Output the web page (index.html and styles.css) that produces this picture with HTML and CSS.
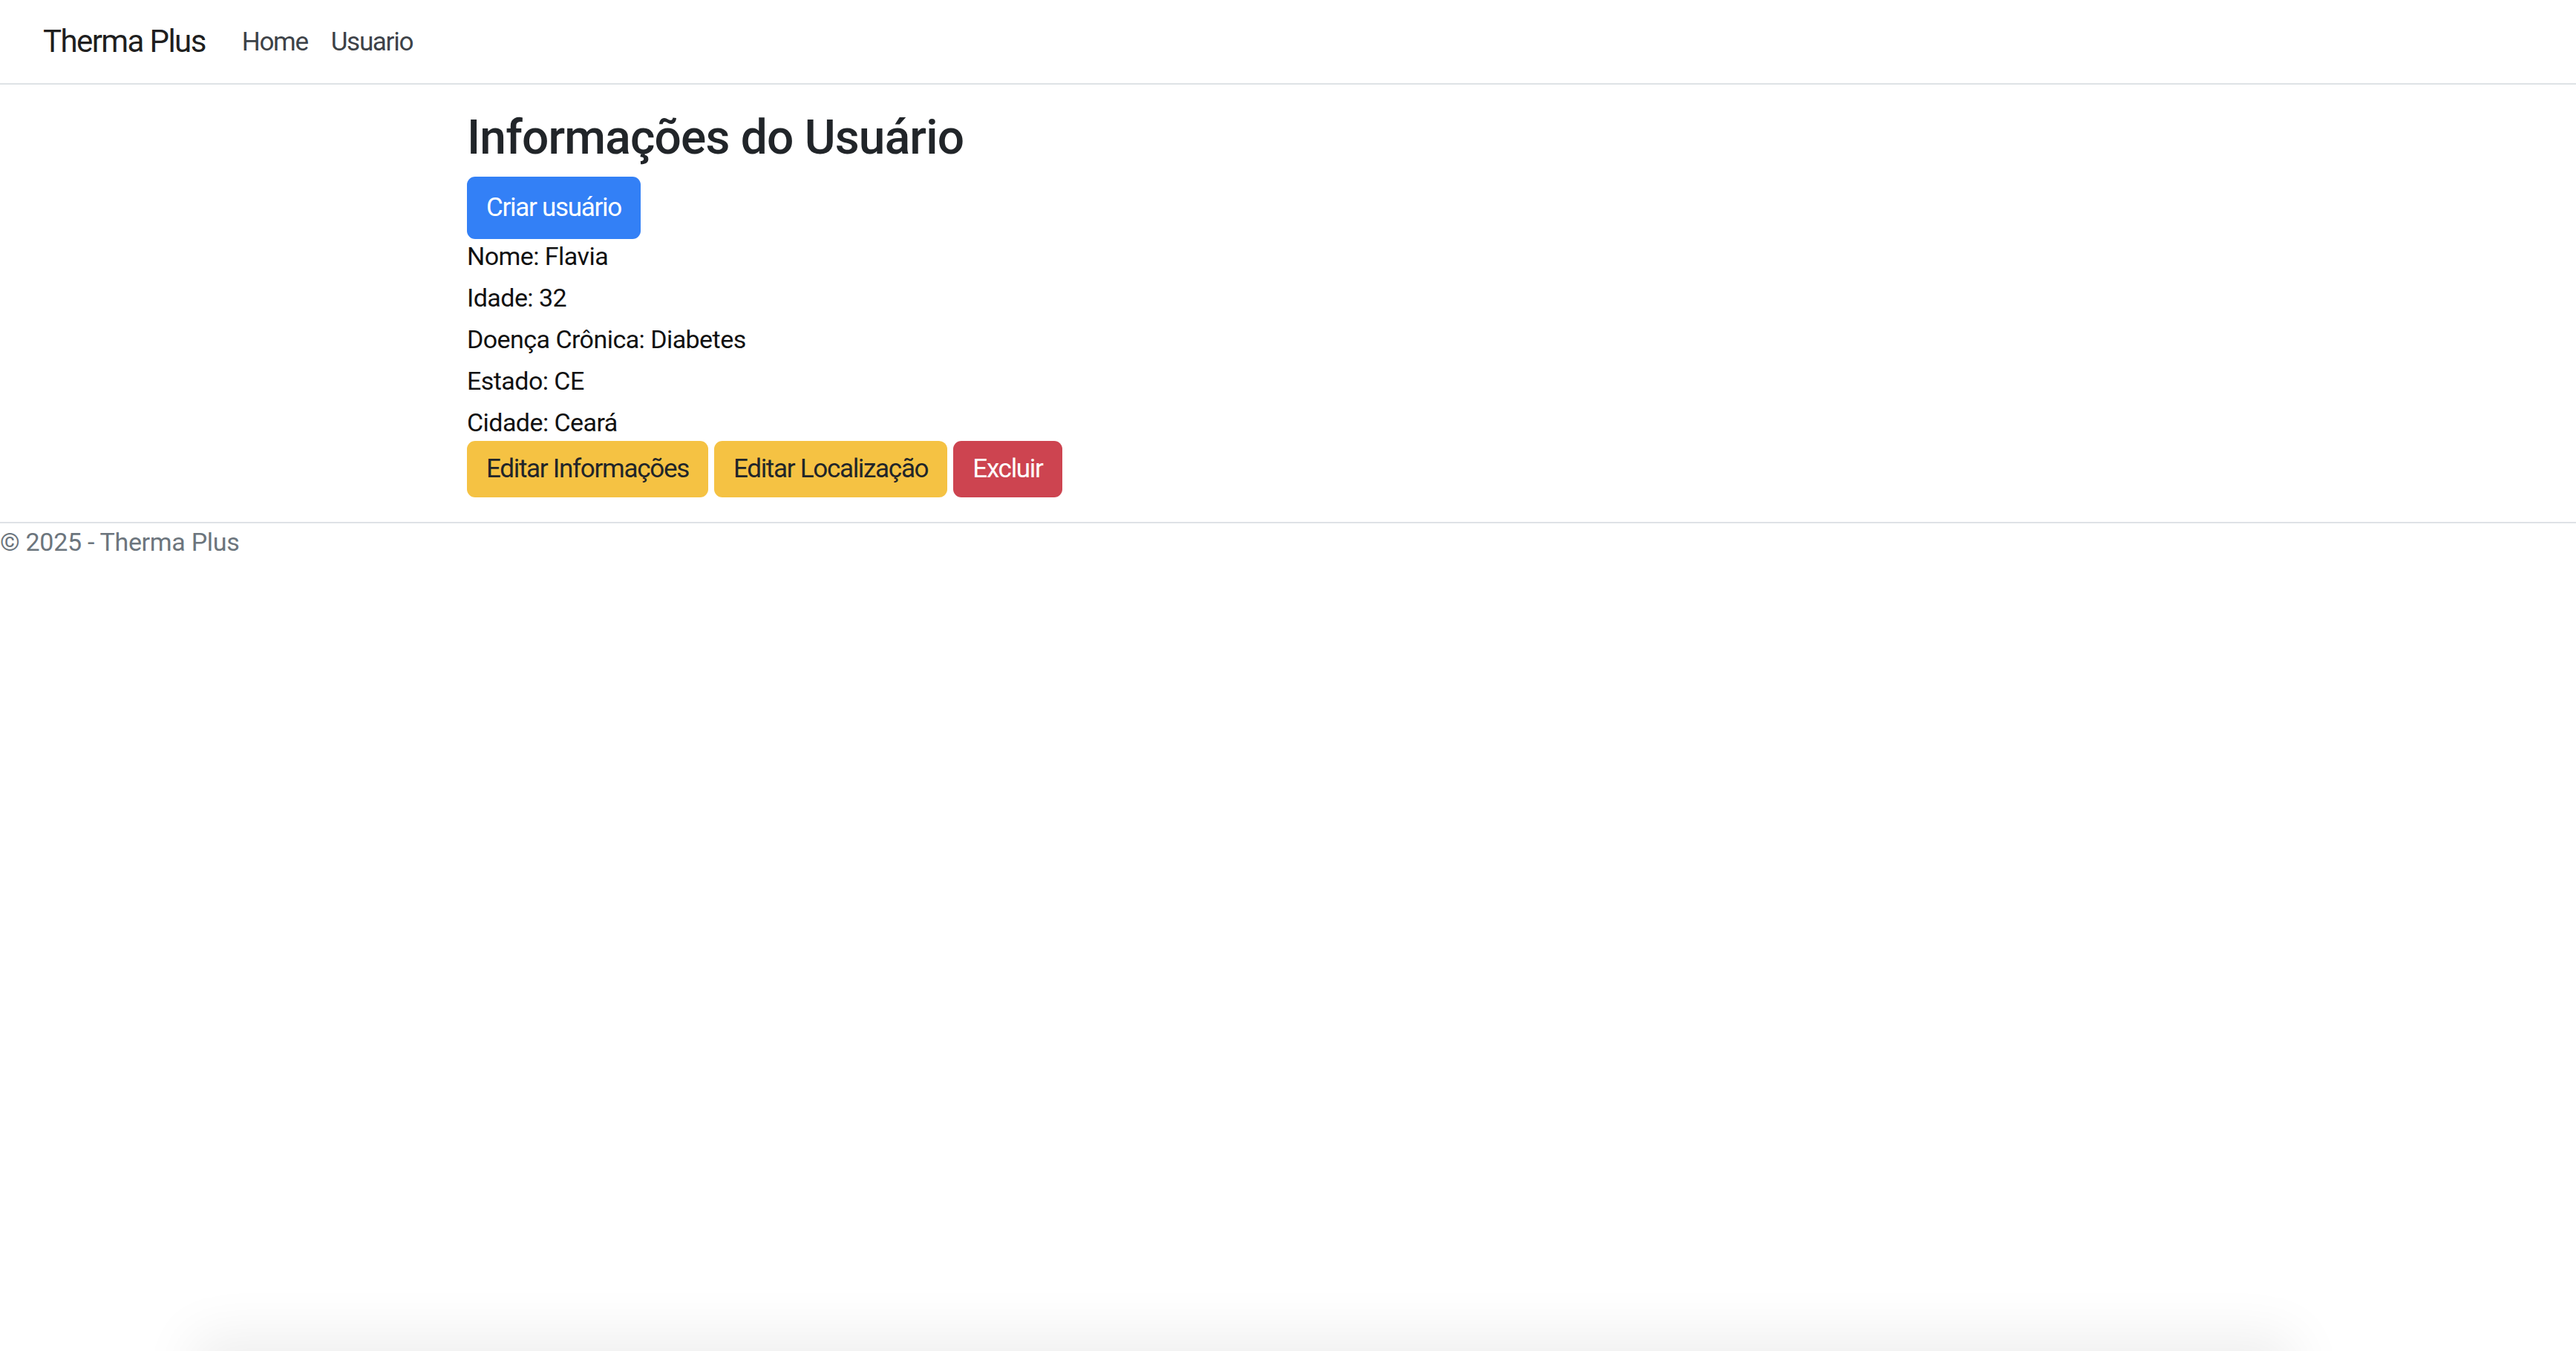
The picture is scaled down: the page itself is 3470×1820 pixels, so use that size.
FILE: index.html
```html
<!DOCTYPE html>
<html lang="pt-BR">
<head>
<meta charset="utf-8">
<title>Usuário - Therma Plus</title>
<link rel="stylesheet" href="styles.css">
</head>
<body>
<header class="navbar">
  <a class="brand" href="#">Therma Plus</a>
  <nav class="nav">
    <a class="nav-link" href="#">Home</a>
    <a class="nav-link" href="#">Usuario</a>
  </nav>
</header>
<main class="container">
  <h2 class="title">Informações do Usuário</h2>
  <a class="btn btn-primary btn-lg-h" href="#">Criar usuário</a>
  <div class="info">
    <div class="info-line">Nome: Flavia</div>
    <div class="info-line">Idade: 32</div>
    <div class="info-line">Doença Crônica: Diabetes</div>
    <div class="info-line">Estado: CE</div>
    <div class="info-line">Cidade: Ceará</div>
  </div>
  <div class="actions">
    <a class="btn btn-warning" href="#">Editar Informações</a>
    <a class="btn btn-warning" href="#">Editar Localização</a>
    <a class="btn btn-danger" href="#">Excluir</a>
  </div>
</main>
<footer class="footer">© 2025 - Therma Plus</footer>
<div class="bottom-shadow"></div>
</body>
</html>
```
FILE: styles.css
```css
* { box-sizing: border-box; }
html, body { margin: 0; padding: 0; background: #fff; }
body {
  font-family: "Roboto", "Inter", "Liberation Sans", sans-serif;
  font-size: 34px;
  color: #212529;
  overflow: hidden;
}
a { text-decoration: none; }

.navbar {
  height: 114px;
  border-bottom: 2px solid #dee2e6;
  display: flex;
  align-items: center;
  padding-left: 58px;
}
.brand {
  font-size: 42px;
  letter-spacing: -1.6px;
  color: rgba(0,0,0,0.9);
  margin-right: 49px;
  line-height: 1;
}
.nav { display: flex; gap: 31px; }
.nav-link {
  font-size: 35px;
  letter-spacing: -1.3px;
  color: #3d4248;
  line-height: 1;
}

.container {
  padding-left: 629px;
  padding-top: 34px;
}
.title {
  font-size: 64px;
  font-weight: 500;
  letter-spacing: -0.8px;
  margin: 0 0 13px 0;
  line-height: 1.2;
  color: #212529;
}
.btn {
  display: inline-flex;
  align-items: center;
  justify-content: center;
  padding: 0 26px;
  border-radius: 11px;
  font-size: 35px;
  letter-spacing: -1.3px;
  line-height: 1;
}
.btn-lg-h { height: 84px; }
.btn-primary { background: #3380f6; color: #fff; }
.btn-warning { background: #f5c243; color: #212529; height: 76px; }
.btn-danger { background: #cd4450; color: #fff; height: 76px; }

.info { display: flex; flex-direction: column; margin-top: -5px; }
.info-line {
  height: 56px;
  line-height: 56px;
  font-size: 34px;
  letter-spacing: -0.55px;
  color: #111;
}
.actions {
  margin-top: -3px;
  display: flex;
  gap: 8px;
}

.footer {
  margin-top: 33px;
  border-top: 2px solid #dee2e6;
  padding-top: 4px;
  font-size: 34px;
  letter-spacing: -0.3px;
  color: #6c757d;
  line-height: 42px;
}

.bottom-shadow {
  position: fixed;
  left: 280px;
  right: 400px;
  top: 100%;
  height: 200px;
  box-shadow: 0 0 70px 20px rgba(0,0,0,0.07);
}
```
